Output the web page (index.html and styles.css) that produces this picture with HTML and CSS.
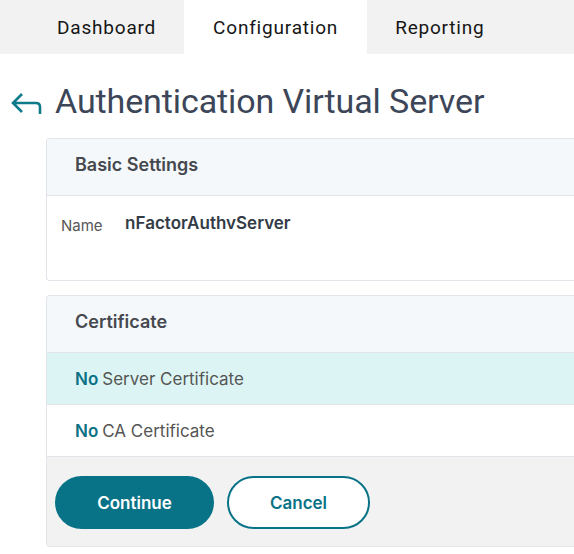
FILE: index.html
```html
<!DOCTYPE html>
<html lang="en">
<head>
    <meta charset="UTF-8">
    <meta name="viewport" content="width=device-width, initial-scale=1.0">
    <title>Authentication Virtual Server</title>
    <link rel="stylesheet" href="styles.css">
</head>
<body>
    <!-- Top navigation tabs -->
    <div class="tab-bar">
        <div class="tab">Dashboard</div>
        <div class="tab active">Configuration</div>
        <div class="tab">Reporting</div>
    </div>

    <div class="page">
        <div class="page-title">
            <svg class="back-icon" width="32" height="24" viewBox="0 0 32 24">
                <path d="M12 3 L3 12 L12 21 M3 12 H26 Q30 12 30 16 V23" fill="none" stroke="#0f7a8a" stroke-width="2.6"/>
            </svg>
            <h1>Authentication Virtual Server</h1>
        </div>

        <!-- Basic Settings -->
        <div class="card">
            <div class="card-header">Basic Settings</div>
            <div class="card-body">
                <span class="field-label">Name</span>
                <span class="field-value">nFactorAuthvServer</span>
            </div>
        </div>

        <!-- Certificate -->
        <div class="card">
            <div class="card-header">Certificate</div>
            <div class="cert-row highlight"><b>No</b> Server Certificate</div>
            <div class="cert-row"><b>No</b> CA Certificate</div>
            <div class="card-footer">
                <button class="btn btn-primary">Continue</button>
                <button class="btn btn-outline">Cancel</button>
            </div>
        </div>
    </div>
</body>
</html>
```

FILE: styles.css
```css
body {
    margin: 0;
    font-family: Inter, "Liberation Sans", sans-serif;
    background-color: white;
    overflow: hidden;
}

/* Tabs */
.tab-bar {
    display: flex;
    height: 54px;
    padding-left: 29px;
    background-color: #f2f2f2;
}

.tab {
    display: flex;
    align-items: center;
    padding: 0 28px;
    font-family: Roboto, sans-serif;
    font-size: 19px;
    letter-spacing: 0.8px;
    color: #161616;
}

.tab.active {
    padding: 0 29px;
    background-color: white;
}

/* Page */
.page {
    padding-left: 46px;
}

.page-title {
    display: flex;
    align-items: center;
    margin-left: -36px;
    height: 84px;
    padding-top: 9px;
    box-sizing: border-box;
}

.back-icon {
    margin-right: 13px;
    margin-top: 4px;
}

h1 {
    margin: 0;
    font-family: Roboto, sans-serif;
    font-weight: 400;
    font-size: 34px;
    letter-spacing: -0.1px;
    color: #3c4658;
}

.card {
    border: 1px solid #e1e5ea;
    border-right: none;
    border-radius: 4px 0 0 4px;
    margin-bottom: 14px;
    overflow: hidden;
}

.card-header {
    height: 57px;
    padding: 0 0 5px 28px;
    box-sizing: border-box;
    display: flex;
    align-items: center;
    background-color: #f5f8fb;
    border-bottom: 1px solid #e1e5ea;
    font-size: 18px;
    font-weight: 600;
    color: #45494f;
}

.card-body {
    height: 84px;
    padding: 17px 0 0 14px;
    box-sizing: border-box;
}

.field-label {
    font-size: 15px;
    color: #555;
    margin-right: 18px;
    position: relative;
    top: 2px;
}

.field-value {
    font-size: 17px;
    font-weight: 600;
    color: #333b47;
}

.cert-row {
    height: 52px;
    padding-left: 28px;
    box-sizing: border-box;
    display: flex;
    align-items: center;
    font-size: 17px;
    color: #555;
    border-bottom: 1px solid #e1e5ea;
}

.cert-row b {
    color: #0b7185;
    font-weight: 600;
    margin-right: 4px;
}

.cert-row.highlight {
    background-color: #dcf5f4;
}

.card-footer {
    height: 89px;
    padding: 19px 0 0 8px;
    box-sizing: border-box;
    background-color: #f2f2f2;
    display: flex;
    align-items: flex-start;
    gap: 13px;
}

.btn {
    height: 53px;
    border-radius: 27px;
    font-family: Inter, sans-serif;
    font-size: 17px;
    font-weight: 600;
    cursor: pointer;
}

.btn-primary {
    width: 159px;
    background-color: #087387;
    border: none;
    color: white;
}

.btn-outline {
    width: 143px;
    background-color: white;
    border: 2px solid #087387;
    color: #087387;
}
```
